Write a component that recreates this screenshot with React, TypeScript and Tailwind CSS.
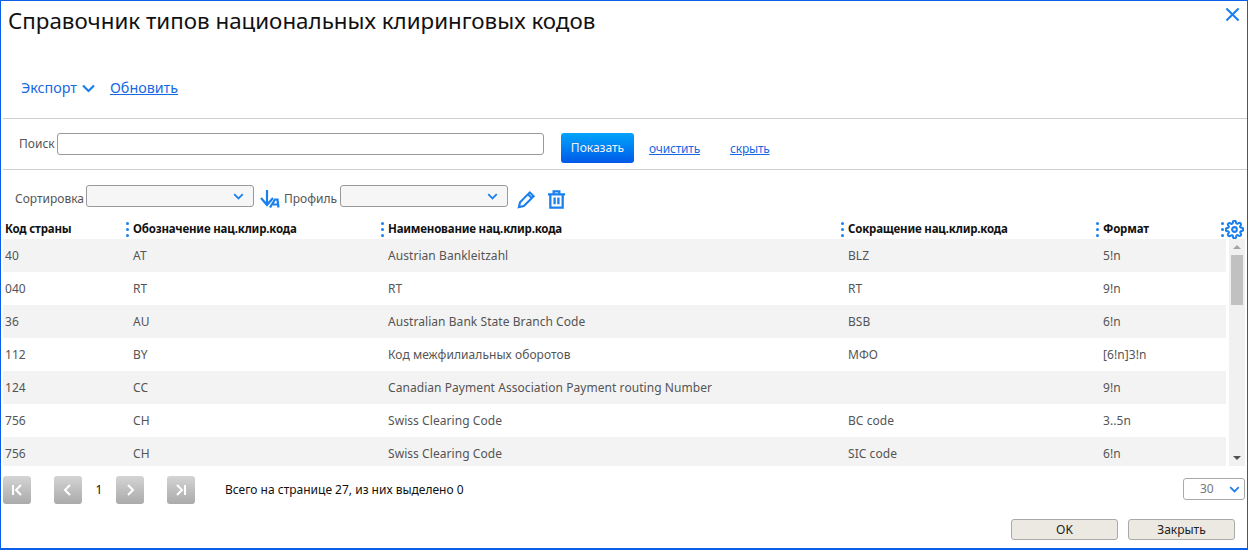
const rows = [
  ["40", "AT", "Austrian Bankleitzahl", "BLZ", "5!n"],
  ["040", "RT", "RT", "RT", "9!n"],
  ["36", "AU", "Australian Bank State Branch Code", "BSB", "6!n"],
  ["112", "BY", "Код межфилиальных оборотов", "МФО", "[6!n]3!n"],
  ["124", "CC", "Canadian Payment Association Payment routing Number", "", "9!n"],
  ["756", "CH", "Swiss Clearing Code", "BC code", "3..5n"],
  ["756", "CH", "Swiss Clearing Code", "SIC code", "6!n"],
];

const columns = [
  { title: "Код страны", width: "w-[120px]" },
  { title: "Обозначение нац.клир.кода", width: "w-[255px]" },
  { title: "Наименование нац.клир.кода", width: "w-[460px]" },
  { title: "Сокращение нац.клир.кода", width: "w-[255px]" },
  { title: "Формат", width: "w-[126px]" },
];

const Chevron = ({ className }: { className: string }) => (
  <svg viewBox="0 0 14 9" className={className} fill="none" stroke="#1a7fef" strokeWidth="2.2">
    <path d="M1.5 1.5 7 7l5.5-5.5" />
  </svg>
);

const Dots = () => (
  <span className="flex h-[15px] w-[3px] shrink-0 flex-col justify-between">
    <i className="block h-[3px] w-[3px] rounded-full bg-[#1a7fef]" />
    <i className="block h-[3px] w-[3px] rounded-full bg-[#1a7fef]" />
    <i className="block h-[3px] w-[3px] rounded-full bg-[#1a7fef]" />
  </span>
);

const PageButton = ({ d, className = "" }: { d: string; className?: string }) => (
  <button className={`flex h-[28px] w-[28px] items-center justify-center rounded-[3px] bg-gradient-to-b from-[#d4d4d4] to-[#aaaaaa] ${className}`}>
    <svg viewBox="0 0 16 16" className="h-4 w-4" fill="none" stroke="#fff" strokeWidth="2">
      <path d={d} />
    </svg>
  </button>
);

const SelectBox = ({ className }: { className: string }) => (
  <div className={`flex h-[22px] items-center justify-end rounded-[3px] border border-[#999] bg-[#f6f6f6] pr-[9px] ${className}`}>
    <Chevron className="h-[7px] w-[11px]" />
  </div>
);

export default function App() {
  return (
    <div className="flex h-[550px] w-[1248px] flex-col overflow-hidden border border-b-2 border-[#0a5fe8] bg-white font-['Noto_Sans',sans-serif] text-[12px] text-[#555]">
      <div className="ml-[2px] flex h-[118px] flex-col border-b border-[#cfcfcf]">
        <div className="flex items-start justify-between pl-[5px] pr-[7px]">
          <h1 className="pt-[3px] text-[22.35px] leading-[34px] text-[#111]">Справочник типов национальных клиринговых кодов</h1>
          <svg viewBox="0 0 16 16" className="mt-[6px] h-[15px] w-[15px]" fill="none" stroke="#1a7fef" strokeWidth="2.2">
            <path d="M1.500 1.500l13 13M14.500 1.500l-13 13" />
          </svg>
        </div>
        <div className="mt-[40px] flex items-center pl-[18px] text-[14.3px] leading-[20px] text-[#1668e3]">
          <span>Экспорт</span>
          <Chevron className="ml-[4px] h-[9px] w-[15px]" />
          <a className="ml-[14px] text-[#1668e3] underline">Обновить</a>
        </div>
      </div>

      <div className="ml-[2px] flex h-[51px] items-start border-b border-[#cfcfcf] pl-[16px] pt-[14px]">
        <span className="w-[38px] leading-[22px]">Поиск</span>
        <div className="h-[22px] w-[487px] rounded-[3px] border border-[#999] bg-white" />
        <button className="ml-[17px] h-[30px] w-[73px] rounded-[3px] bg-gradient-to-b from-[#08a4fb] to-[#0058e8] text-[#f2f2f2]">Показать</button>
        <a className="ml-[15px] mt-[8px] leading-[16px] tracking-[-0.2px] text-[#1668e3] underline">очистить</a>
        <a className="ml-[30px] mt-[8px] leading-[16px] tracking-[-0.2px] text-[#1668e3] underline">скрыть</a>
      </div>

      <div className="flex h-[37px] items-start pl-[14px] pt-[15px]">
        <span className="mt-[3px] w-[71px] leading-[22px]">Сортировка</span>
        <SelectBox className="w-[168px]" />
        <svg viewBox="0 0 20 18" className="ml-[6px] mt-[5px] h-[18px] w-[20px]" fill="none" stroke="#1a7fef" strokeWidth="2.2">
          <path d="M7 0v14M1 8l6 7 6-7" />
          <path d="M10 17.500l5-8h2.500l1 8M13 14.500h5" strokeWidth="2.200" />
        </svg>
        <span className="ml-[4px] mt-[3px] w-[56px] leading-[22px]">Профиль</span>
        <SelectBox className="w-[168px]" />
        <svg viewBox="0 0 20 20" className="ml-[9px] mt-[5px] h-[19px] w-[19px]" fill="none" stroke="#1a7fef" strokeWidth="2.2">
          <path d="M2 18l1.200-5.200L13.500 2.500l4 4L7.200 16.800zM11.500 4.500l4 4" />
        </svg>
        <svg viewBox="0 0 20 20" className="ml-[11px] mt-[5px] h-[19px] w-[19px]" fill="none" stroke="#1a7fef" strokeWidth="2.4">
          <path d="M1 4.500h18M7 4V1.500h6V4M3.500 5v13.500h13V5M8 8v7M12 8v7" />
        </svg>
      </div>

      <div className="mt-[10px] flex h-[22px] items-center pl-[4px] pt-[2px] text-[11.5px] font-bold tracking-[-0.2px] text-[#111]">
        {columns.map((col, i) => (
          <div key={col.title} className={`flex items-center ${col.width} ${i === 0 ? "" : "pl-[1px]"}`}>
            {i > 0 && <Dots />}
            <span className={i === 0 ? "" : "ml-[4px]"}>{col.title}</span>
          </div>
        ))}
        <Dots />
        <svg viewBox="0 0 24 24" className="ml-[1px] h-[19px] w-[19px]" fill="none" stroke="#1a7fef" strokeWidth="2.6">
          <circle cx="12" cy="12" r="3" />
          <path d="M19.400 15a1.650 1.650 0 0 0 .33 1.820l.06.06a2 2 0 1 1-2.830 2.830l-.06-.06a1.650 1.650 0 0 0-2.820 1.170V21a2 2 0 0 1-4 0v-.09A1.650 1.650 0 0 0 7.200 19.740l-.06.06a2 2 0 1 1-2.830-2.830l.06-.06a1.650 1.650 0 0 0-1.170-2.820H3a2 2 0 0 1 0-4h.09A1.650 1.650 0 0 0 4.260 7.200l-.06-.06a2 2 0 1 1 2.830-2.830l.06.06a1.650 1.650 0 0 0 2.820-1.170V3a2 2 0 0 1 4 0v.09a1.650 1.650 0 0 0 2.820 1.170l.06-.06a2 2 0 1 1 2.830 2.830l-.06.06a1.650 1.650 0 0 0 1.170 2.820H21a2 2 0 0 1 0 4h-.09a1.650 1.650 0 0 0-1.510 1z" />
        </svg>
      </div>

      <div className="flex h-[227px] shrink-0 overflow-hidden pl-[2px] tracking-[0.06px]">
        <div className="w-[1223px] shrink-0">
          {rows.map((row, i) => (
            <div key={i} className={`flex h-[33px] items-center pl-[2px] ${i % 2 === 0 ? "bg-[#f3f3f3]" : "bg-white"}`}>
              <span className="w-[128px]">{row[0]}</span>
              <span className="w-[255px]">{row[1]}</span>
              <span className="w-[460px]">{row[2]}</span>
              <span className="w-[255px]">{row[3]}</span>
              <span>{row[4]}</span>
            </div>
          ))}
        </div>
        <div className="ml-[3px] flex w-[16px] flex-col items-center justify-between bg-[#f1f1f1] py-[6px]">
          <div className="flex w-full flex-col items-center">
            <div className="h-0 w-0 border-x-[4px] border-b-[4px] border-x-transparent border-b-[#a3a3a3]" />
            <div className="mt-[6px] h-[50px] w-[12px] bg-[#c1c1c1]" />
          </div>
          <div className="h-0 w-0 border-x-[4px] border-t-[4px] border-x-transparent border-t-[#505050]" />
        </div>
      </div>

      <div className="flex items-center pl-[2px] pr-[2px] pt-[10px] text-[#111]">
        <PageButton d="M4 3v10M12 3L7 8l5 5" />
        <PageButton d="M10 3L5 8l5 5" className="ml-[23px]" />
        <span className="w-[34px] text-center">1</span>
        <PageButton d="M6 3l5 5-5 5" />
        <PageButton d="M4 3l5 5-5 5M12 3v10" className="ml-[23px]" />
        <span className="ml-[30px]">Всего на странице 27, из них выделено 0</span>
        <div className="mb-[2px] ml-auto flex h-[22px] w-[62px] items-center justify-between rounded-[3px] border border-[#aaa] pl-[16px] pr-[4px] text-[#777]">
          <span>30</span>
          <Chevron className="h-[7px] w-[11px]" />
        </div>
      </div>

      <div className="mt-[15px] flex justify-end gap-[10px] pr-[12px] text-[#222]">
        <button className="h-[21px] w-[107px] rounded-[3px] border border-[#aaa] bg-[#ece9e3]">OK</button>
        <button className="h-[21px] w-[107px] rounded-[3px] border border-[#aaa] bg-[#ece9e3]">Закрыть</button>
      </div>
    </div>
  );
}
